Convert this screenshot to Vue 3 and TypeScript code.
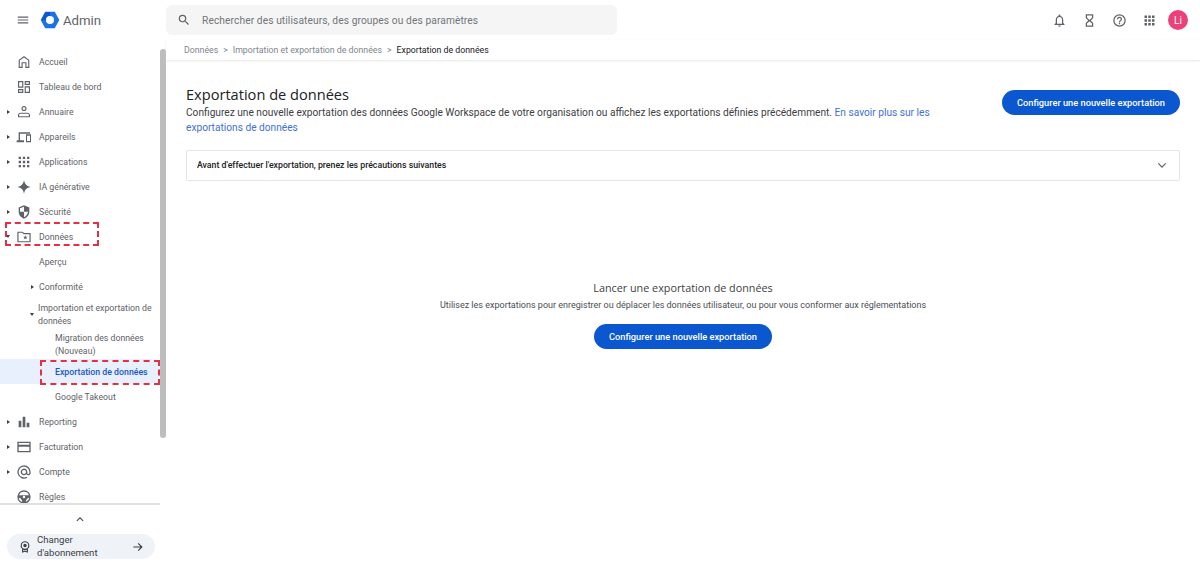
<script setup lang="ts">
interface Item { label: string; icon?: string; arrow?: boolean }
const top: Item[] = [
  { label: 'Accueil', icon: 'M12 3 4 9v12h6v-7h4v7h6V9l-8-6Zm0 2.200 6.300 4.700v9.400h-2.600v-7h-7.400v7H5.700V9.900L12 5.200Z' },
  { label: 'Tableau de bord', icon: 'M3 3h8v10H3V3Zm1.700 1.700v6.600h4.600V4.700H4.700ZM13 3h8v6h-8V3Zm1.700 1.700v2.600h4.600V4.700h-4.600ZM13 11h8v10h-8V11Zm1.700 1.700v6.600h4.600v-6.600h-4.600ZM3 15h8v6H3v-6Zm1.700 1.700v2.600h4.600v-2.600H4.700Z' },
  { label: 'Annuaire', arrow: true, icon: 'M12 3a3.800 3.800 0 1 1 0 7.600A3.800 3.800 0 0 1 12 3Zm0 1.700a2.100 2.100 0 1 0 0 4.200 2.100 2.100 0 0 0 0-4.200ZM7 13h10c2.400 0 4 1.500 4 3.500V20H3v-3.500C3 14.500 4.600 13 7 13Zm0 1.700c-1.400 0-2.300.8-2.300 1.800v1.800h14.600v-1.800c0-1-.9-1.800-2.300-1.800H7Z' },
  { label: 'Appareils', arrow: true, icon: 'M4 5h17v2H6v10h6v3H1v-3h3V5Zm11 3h7.500v12H15V8Zm1.500 2v8h4.500v-8h-4.500Z' },
  { label: 'Applications', arrow: true, icon: 'M4 4h3.500v3.500H4V4Zm6.250 0h3.500v3.500h-3.500V4ZM16.500 4H20v3.500h-3.500V4ZM4 10.250h3.500v3.500H4v-3.500Zm6.250 0h3.500v3.500h-3.500v-3.500Zm6.250 0H20v3.500h-3.500v-3.500ZM4 16.500h3.500V20H4v-3.500Zm6.250 0h3.500V20h-3.500v-3.500Zm6.250 0H20V20h-3.500v-3.500Z' },
  { label: 'IA générative', arrow: true, icon: 'M12 2c.8 5.800 4.200 9.200 10 10-5.800.8-9.200 4.200-10 10-.8-5.800-4.200-9.200-10-10 5.800-.8 9.200-4.200 10-10Z' },
  { label: 'Sécurité', arrow: true, icon: 'M12 2 4 5.200v6c0 5 3.400 9.300 8 10.800 4.600-1.500 8-5.800 8-10.800v-6L12 2Zm0 2v7.500h6v.2c-.5 3.700-2.900 6.900-6 8.100v-8.300H6V6.500L12 4Z' },
  { label: 'Données', arrow: true, icon: 'M2 4h8l2 2h10v14H2V4Zm1.800 1.800v12.400h16.400V7.800h-8.900l-2-2H3.800ZM14 9.500l.9 2.100 2.300.2-1.700 1.500.5 2.200-2-1.200-2 1.200.5-2.200-1.700-1.500 2.300-.2.900-2.100Z' }
]
const bottom: Item[] = [
  { label: 'Reporting', arrow: true, icon: 'M4 10h4v10H4V10Zm6-6h4v16h-4V4ZM16 13h4v7h-4v-7Z' },
  { label: 'Facturation', arrow: true, icon: 'M2 4h20v16H2V4Zm2 2v2.500h16V6H4Zm0 5.500V18h16v-6.500H4Z' },
  { label: 'Compte', arrow: true, icon: 'M12 2a10 10 0 1 0 5 18.700l-1-1.700a8 8 0 1 1 4-7v1.400c0 .8-.7 1.600-1.500 1.600s-1.500-.8-1.500-1.600V12a5 5 0 1 0-1.500 3.500c.7.900 1.800 1.500 3 1.500 2 0 3.500-1.600 3.500-3.600V12A10 10 0 0 0 12 2Zm0 13a3 3 0 1 1 0-6 3 3 0 0 1 0 6Z' },
  { label: 'Règles', icon: 'M12 2a10 10 0 1 0 0 20 10 10 0 0 0 0-20Zm0 2a8 8 0 0 1 7.500 5.200H4.500A8 8 0 0 1 12 4Zm0 9.800a1.800 1.800 0 1 1 0-3.600 1.800 1.800 0 0 1 0 3.600ZM4.100 13c2.700 0 4.900 2.800 5.300 6.500A8 8 0 0 1 4.100 13Zm10.500 6.500c.4-3.700 2.600-6.500 5.300-6.500a8 8 0 0 1-5.300 6.500Z' }
]
const cta = 'Configurer une nouvelle exportation'
</script>

<template>
  <div class="page">
    <header class="topbar">
      <div class="brand">
        <svg class="menu" viewBox="0 0 24 24"><path d="M3 6h18v2H3V6Zm0 5h18v2H3v-2Zm0 5h18v2H3v-2Z" /></svg>
        <svg class="logo" viewBox="0 0 24 24">
          <path fill="#1a73e8" stroke="#1a73e8" stroke-width="2" stroke-linejoin="round" d="M7 3h10l5 9-5 9H7l-5-9 5-9Z" />
          <path fill="#0b57d0" d="M1.500 12 6.500 2.500H12V7a5 5 0 0 0-5 5H1.500Z" />
          <circle cx="12" cy="12" r="4.800" fill="#fff" />
        </svg>
        <span class="admin">Admin</span>
      </div>
      <div class="search">
        <svg class="search-icon" viewBox="0 0 24 24"><path d="M15.500 14h-.79l-.28-.27A6.471 6.471 0 0 0 16 9.500 6.500 6.500 0 1 0 9.500 16c1.610 0 3.090-.59 4.230-1.570l.27.28v.79l5 4.990L20.490 19l-4.990-5Zm-6 0C7.010 14 5 11.990 5 9.500S7.010 5 9.500 5 14 7.010 14 9.500 11.990 14 9.500 14Z" /></svg>
        <span>Rechercher des utilisateurs, des groupes ou des paramètres</span>
      </div>
      <div class="actions">
        <svg viewBox="0 0 24 24"><path d="M12 22a2 2 0 0 0 2-2h-4a2 2 0 0 0 2 2Zm6-6v-5c0-3.100-1.600-5.600-4.500-6.300V4a1.500 1.500 0 0 0-3 0v.7C7.600 5.400 6 7.900 6 11v5l-2 2v1h16v-1l-2-2Zm-2 1H8v-6c0-2.500 1.500-4.500 4-4.500s4 2 4 4.500v6Z" /></svg>
        <svg viewBox="0 0 24 24"><path d="M6 2h12v6l-4 4 4 4v6H6v-6l4-4-4-4V2Zm2 2v3.200l4 4 4-4V4H8Zm4 9-4 3.800V20h8v-3.200L12 13Z" /></svg>
        <svg viewBox="0 0 24 24"><path d="M12 2a10 10 0 1 0 0 20 10 10 0 0 0 0-20Zm0 18a8 8 0 1 1 0-16 8 8 0 0 1 0 16Zm-1-4h2v2h-2v-2Zm1-10a4 4 0 0 0-4 4h2a2 2 0 1 1 4 0c0 2-3 1.800-3 5h2c0-2.300 3-2.500 3-5a4 4 0 0 0-4-4Z" /></svg>
        <svg viewBox="0 0 24 24"><path d="M4 4h4v4H4V4Zm6 0h4v4h-4V4Zm6 0h4v4h-4V4ZM4 10h4v4H4v-4Zm6 0h4v4h-4v-4Zm6 0h4v4h-4v-4ZM4 16h4v4H4v-4Zm6 0h4v4h-4v-4Zm6 0h4v4h-4v-4Z" /></svg>
        <div class="avatar">Li</div>
      </div>
    </header>

    <div class="body">
      <aside class="side">
        <div class="side-scroll">
          <nav class="nav">
            <div v-for="item in top" :key="item.label" class="row">
              <i class="tri" :class="{ hidden: !item.arrow, down: item.label === 'Données' }"></i>
              <svg class="nav-icon" viewBox="0 0 24 24"><path :d="item.icon" /></svg>
              <span>{{ item.label }}</span>
            </div>
            <div class="row sub"><span>Aperçu</span></div>
            <div class="row sub"><i class="tri small"></i><span>Conformité</span></div>
            <div class="row sub tall"><i class="tri small down"></i><span>Importation et exportation de données</span></div>
            <div class="row leaf two"><span>Migration des données<br />(Nouveau)</span></div>
            <div class="row leaf active"><span>Exportation de données</span></div>
            <div class="row leaf"><span>Google Takeout</span></div>
            <div v-for="item in bottom" :key="item.label" class="row">
              <i class="tri" :class="{ hidden: !item.arrow }"></i>
              <svg class="nav-icon" viewBox="0 0 24 24"><path :d="item.icon" /></svg>
              <span>{{ item.label }}</span>
            </div>
          </nav>
          <div class="thumb"></div>
        </div>
        <div class="side-foot">
          <svg class="chev" viewBox="0 0 24 24"><path d="M12 8 5 15l1.500 1.500L12 11l5.500 5.500L19 15l-7-7Z" /></svg>
          <div class="plan">
            <svg viewBox="0 0 24 24"><path d="M12 2a7.500 7.500 0 0 0-5 13.100V22l5-2 5 2v-6.900A7.500 7.500 0 0 0 12 2Zm0 2a5.500 5.500 0 1 1 0 11 5.500 5.500 0 0 1 0-11Zm0 2.500a3 3 0 1 0 0 6 3 3 0 0 0 0-6ZM9 16.500c1.900.7 4.100.7 6 0v2.600l-3-1.200-3 1.200v-2.600Z" /></svg>
            <span>Changer d'abonnement</span>
            <svg class="go" viewBox="0 0 24 24"><path d="m13 5-1.400 1.400 4.600 4.600H4v2h12.200l-4.600 4.600L13 19l7-7-7-7Z" /></svg>
          </div>
        </div>
        <div class="mark mark-a"></div>
        <div class="mark mark-b"></div>
      </aside>

      <main class="main">
        <div class="crumbs">
          <span>Données</span><b>&gt;</b><span>Importation et exportation de données</span><b>&gt;</b><span class="here">Exportation de données</span>
        </div>
        <div class="content">
          <section class="head">
            <div class="head-text">
              <h1>Exportation de données</h1>
              <p>Configurez une nouvelle exportation des données Google Workspace de votre organisation ou affichez les exportations définies précédemment. <a>En savoir plus sur les exportations de données</a></p>
            </div>
            <button class="cta">{{ cta }}</button>
          </section>
          <div class="panel">
            <span>Avant d'effectuer l'exportation, prenez les précautions suivantes</span>
            <svg viewBox="0 0 24 24"><path d="M6.500 8.500 12 14l5.500-5.500L19 10l-7 7-7-7 1.500-1.500Z" /></svg>
          </div>
          <section class="empty">
            <h2>Lancer une exportation de données</h2>
            <p>Utilisez les exportations pour enregistrer ou déplacer les données utilisateur, ou pour vous conformer aux réglementations</p>
            <button class="cta">{{ cta }}</button>
          </section>
        </div>
      </main>
    </div>
  </div>
</template>

<style>
html, body { margin: 0; background: #fff; overflow: hidden; }
</style>

<style scoped>
.page { width: 1200px; height: 574px; display: flex; flex-direction: column; font-family: Roboto, "Liberation Sans", sans-serif; color: #3c4043; overflow: hidden; background: #fff; }
.topbar { height: 40px; display: flex; align-items: center; flex: none; }
.brand { width: 166px; display: flex; align-items: center; padding-left: 16px; box-sizing: border-box; flex: none; }
.menu { width: 14px; height: 14px; fill: #5f6368; margin-right: 10px; }
.logo { width: 20px; height: 20px; margin-right: 3px; }
.admin { font-size: 13.200px; color: #5f6368; }
.search { width: 451px; height: 30px; background: #f5f5f5; border-radius: 6px; display: flex; align-items: center; padding-left: 11px; box-sizing: border-box; font-size: 10.200px; color: #70757a; letter-spacing: .1px; }
.search-icon { width: 14px; height: 14px; fill: #5f6368; margin-right: 11px; }
.actions { margin-left: auto; display: flex; align-items: center; padding-right: 12px; gap: 15px; }
.actions svg { width: 15px; height: 15px; fill: #5f6368; }
.avatar { width: 20px; height: 20px; border-radius: 50%; background: #ec407a; color: #fff; font-size: 10px; display: flex; align-items: center; justify-content: center; margin-left: -3.500px; }
.body { flex: 1; display: flex; min-height: 0; }
.side { width: 166px; flex: none; position: relative; display: flex; flex-direction: column; }
.side-scroll { height: 454px; margin-top: 9px; position: relative; overflow: hidden; flex: none; }
.nav { width: 160px; }
.row { height: 25px; display: flex; align-items: center; font-size: 8.750px; color: #5f6368; box-sizing: border-box; padding-left: 6px; }
.row .tri { margin-right: 6px; }
.tri { width: 0; height: 0; border-top: 2.500px solid transparent; border-bottom: 2.500px solid transparent; border-left: 3px solid #3c4043; flex: none; margin-left: 1px; }
.tri.hidden { visibility: hidden; }
.tri.down { border-left: 2.500px solid transparent; border-right: 2.500px solid transparent; border-top: 3px solid #3c4043; border-bottom: 0; margin-left: 0; }
.nav-icon { width: 16px; height: 16px; fill: #5f6368; margin-right: 7px; flex: none; }
.sub { padding-left: 39px; }
.sub .tri { margin-left: -8px; margin-right: 5px; }
.sub .tri.down { margin-left: -9px; margin-right: 4px; }
.tall { height: 31px; line-height: 12.500px; padding-right: 2px; }
.tall span { width: 120px; }
.leaf { padding-left: 55px; padding-right: 4px; }
.two { height: 29px; line-height: 12.500px; }
.active { background: #e8f0fe; color: #1a56c4; font-weight: 500; border-radius: 0 10px 10px 0; }
.thumb { position: absolute; right: 0; top: 0; width: 6px; height: 389px; background: #bdbdbd; border-radius: 3px; }
.side-foot { width: 160px; border-top: 2px solid #e0e0e0; height: 71px; box-sizing: border-box; display: flex; flex-direction: column; align-items: flex-start; }
.chev { width: 12px; height: 12px; fill: #3c4043; margin: 8px 0 0 74px; }
.plan { margin: 9px 0 0 7px; width: 148px; height: 25px; border-radius: 13px; background: #eff3f8; display: flex; align-items: center; box-sizing: border-box; padding-left: 11px; font-size: 9.600px; line-height: 12.500px; color: #3c4043; }
.plan svg { width: 14px; height: 14px; fill: #3c4043; flex: none; }
.plan span { width: 76px; margin-left: 5px; }
.plan .go { margin-left: 18px; }
.mark { position: absolute; border: 2px dashed #e53042; box-sizing: border-box; pointer-events: none; }
.mark-a { left: 5px; top: 182px; width: 94px; height: 24px; }
.mark-b { left: 40px; top: 320px; width: 120px; height: 25px; }
.main { flex: 1; min-width: 0; display: flex; flex-direction: column; }
.crumbs { height: 20px; flex: none; display: flex; align-items: center; padding: 0 0 1px 18px; box-sizing: border-box; font-size: 8.750px; color: #80868b; box-shadow: 0 1px 2px rgba(60,64,67,.12); }
.crumbs b { font-weight: 400; margin: 0 5px; }
.here { color: #202124; }
.content { padding: 0 20px; flex: 1; display: flex; flex-direction: column; }
.head { display: flex; justify-content: space-between; align-items: flex-start; margin-top: 25px; }
.head-text { width: 760px; }
h1 { margin: 0 0 1.500px; font-size: 14.600px; font-weight: 400; line-height: 18px; color: #202124; font-family: "Open Sans", Roboto, sans-serif; }
.head p { margin: 0; font-size: 10.170px; line-height: 15px; color: #3c4043; }
a { color: #3f6fd8; }
.cta { background: #0b57d0; color: #fff; font: 500 9.250px Roboto, "Liberation Sans", sans-serif; height: 25px; width: 178px; border: 0; border-radius: 13px; padding: 0; }
.head .cta { margin-top: 5px; }
.panel { margin-top: 15px; height: 31px; border: 1px solid #e4e6e8; border-radius: 2px; display: flex; align-items: center; justify-content: space-between; padding: 0 10px 1px; box-sizing: border-box; font-size: 8.750px; font-weight: 500; color: #202124; }
.panel svg { width: 14px; height: 14px; fill: #5f6368; }
.empty { display: flex; flex-direction: column; align-items: center; margin-top: 100px; }
h2 { margin: 0; font-size: 10.800px; font-weight: 400; line-height: 14px; color: #3c4043; font-family: "Open Sans", Roboto, sans-serif; }
.empty p { margin: 3px 0 12px; font-size: 9px; line-height: 14px; color: #4a4e52; }
</style>
